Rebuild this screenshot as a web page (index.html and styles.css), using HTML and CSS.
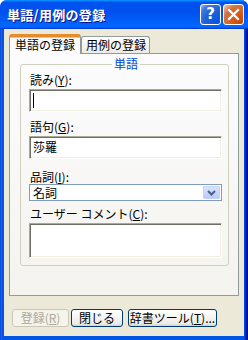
FILE: index.html
```html
<!DOCTYPE html>
<html lang="ja">
<head>
<meta charset="utf-8">
<title>単語/用例の登録</title>
<link rel="stylesheet" href="styles.css">
</head>
<body>
<div class="window">
  <div class="titlebar">
    <span class="title">単語/用例の登録</span>
    <div class="tb-buttons">
      <span class="tb-btn help">?</span>
      <span class="tb-btn close"><svg width="13" height="13" viewBox="0 0 13 13"><path d="M2 2 L11 11 M11 2 L2 11" stroke="#fff" stroke-width="2.2" stroke-linecap="square"/></svg></span>
    </div>
  </div>
  <div class="client">
    <div class="tabs">
      <div class="tab active">単語の登録</div>
      <div class="tab">用例の登録</div>
    </div>
    <div class="panel">
      <div class="group">
        <span class="legend">単語</span>
        <div class="label l1">読み(<u>Y</u>):</div>
        <div class="textbox tb1"><span class="caret"></span></div>
        <div class="label l2">語句(<u>G</u>):</div>
        <div class="textbox tb2">莎羅</div>
        <div class="label l3">品詞(<u>I</u>):</div>
        <div class="combo">
          <span class="combo-text">名詞</span>
          <span class="combo-btn"><svg width="9" height="6" viewBox="0 0 9 6"><path d="M1 1 L4.5 4.5 L8 1" fill="none" stroke="#4d6185" stroke-width="2"/></svg></span>
        </div>
        <div class="label l4">ユーザー コメント(<u>C</u>):</div>
        <div class="textbox tb4"></div>
      </div>
    </div>
    <div class="buttons">
      <div class="btn disabled b1">登録(<u>R</u>)</div>
      <div class="btn b2">閉じる</div>
      <div class="btn b3">辞書ツール(<u>T</u>)...</div>
    </div>
  </div>
</div>
</body>
</html>
```
FILE: styles.css
```css
* { box-sizing: border-box; }
html, body { margin: 0; padding: 0; }
body {
  width: 248px;
  height: 340px;
  overflow: hidden;
  background: #ffffff;
  font-family: "Noto Sans CJK JP", "Noto Sans", sans-serif;
  font-size: 12px;
  color: #000;
}
.window {
  width: 248px;
  height: 340px;
  display: flex;
  flex-direction: column;
  background: linear-gradient(90deg, #0831d9 0, #166aee 1px, #0855dd 2px, #0055e5 3px, #0055e5 244px, #003bda 245px, #001ea0 246px, #00138c 247px);
  border-radius: 7px 7px 0 0;
  padding: 0 4px 4px;
}
.titlebar {
  height: 29px;
  margin: 0 -4px;
  display: flex;
  align-items: center;
  justify-content: space-between;
  padding: 0 4px 0 7px;
  border-radius: 7px 7px 0 0;
  background: linear-gradient(180deg, #0997ff, #0053ee 8%, #0050ee 40%, #0066ff 88%, #0066ff 93%, #005bff 95%, #003dd7 96%, #003dd7);
}
.title {
  color: #fff;
  font-weight: bold;
  font-size: 13px;
  letter-spacing: 0.3px;
  text-shadow: 1px 1px #0f1089;
  line-height: 16px;
}
.tb-buttons { display: flex; gap: 2px; }
.tb-btn {
  width: 21px;
  height: 21px;
  border: 1px solid #fff;
  border-radius: 3px;
  display: flex;
  align-items: center;
  justify-content: center;
  color: #fff;
}
.help {
  background: radial-gradient(circle at 90% 90%, #0054e9 0, #2263d5 55%, #4479e4 80%, #a3bbec 100%);
  font-family: "DejaVu Sans", sans-serif;
  font-weight: bold;
  font-size: 15px;
  line-height: 1;
}
.close {
  background: radial-gradient(circle at 90% 90%, #cc4600 0, #dc6527 55%, #cd7546 70%, #ffccb2 100%);
}
.client {
  flex: 1;
  background: #ece9d8;
  display: flex;
  flex-direction: column;
  padding: 5px 5px 0;
}
.tabs {
  display: flex;
  align-items: flex-end;
  height: 19px;
  position: relative;
  z-index: 1;
}
.tab {
  height: 17px;
  line-height: 15px;
  padding: 0 3px 0 4px;
  border: 1px solid #919b9c;
  border-bottom: none;
  border-radius: 3px 3px 0 0;
  background: linear-gradient(180deg, #fff, #ecebe6);
  white-space: nowrap;
}
.tab.active {
  height: 20px;
  margin-bottom: -1px;
  width: 72px;
  text-align: center;
  background: #fcfcfe;
  border-top: 3px solid #e68b2c;
  box-shadow: inset 0 1px #ffc73c;
  line-height: 16px;
  padding: 0;
}
.panel {
  width: 230px;
  height: 243px;
  border: 1px solid #919b9c;
  background: linear-gradient(180deg, #fcfcfe, #f4f3ee);
  padding: 10px 0 0 10px;
}
.group {
  position: relative;
  width: 209px;
  height: 202px;
  border: 1px solid #d0d0bf;
  border-radius: 3px;
  padding: 8px 0 0 8px;
  display: flex;
  flex-direction: column;
}
.legend {
  position: absolute;
  top: -8px;
  left: 91px;
  padding: 0 2px;
  line-height: 14px;
  color: #0046d5;
  background: #fbfbfc;
}
.label {
  line-height: 14px;
  padding-left: 1px;
  white-space: nowrap;
}
.l2 { margin-top: 8px; }
.l3 { margin-top: 11px; }
.l4 { margin-top: 6px; }
.l1, .l2, .l4 { margin-bottom: 2px; }
.textbox {
  width: 193px;
  height: 23px;
  background: #fff;
  border: 1px solid;
  border-color: #aca899 #fff #fff #aca899;
  box-shadow: inset 1px 1px #716f64, inset -1px -1px #f1efe2;
  padding: 2px 3px;
  line-height: 16px;
}
.tb4 { height: 35px; }
.caret {
  display: block;
  width: 1px;
  height: 15px;
  margin-top: 1px;
  background: #000;
}
.combo {
  width: 193px;
  height: 17px;
  border: 1px solid #7f9db9;
  background: #fff;
  display: flex;
  align-items: center;
  justify-content: space-between;
  padding: 0 1px 0 3px;
  line-height: 15px;
}
.combo-btn {
  width: 17px;
  height: 13px;
  border: 1px solid #c3d3fd;
  border-radius: 1px;
  background: linear-gradient(180deg, #d8e4fd, #b9cbf7);
  display: flex;
  align-items: center;
  justify-content: center;
}
.buttons {
  display: flex;
  margin-top: 13px;
  padding-left: 3px;
}
.btn {
  height: 18px;
  line-height: 16px;
  border: 1px solid #003c74;
  border-radius: 3px;
  background: linear-gradient(180deg, #fff, #ecebe6 86%, #d6d0c5);
  text-align: center;
  white-space: nowrap;
}
.b1 { width: 57px; margin-right: 2px; }
.b2 { width: 52px; margin-right: 5px; }
.b3 { width: 89px; }
.btn.disabled {
  border-color: #c9c7ba;
  background: #f5f4ea;
  color: #aca899;
}
```
